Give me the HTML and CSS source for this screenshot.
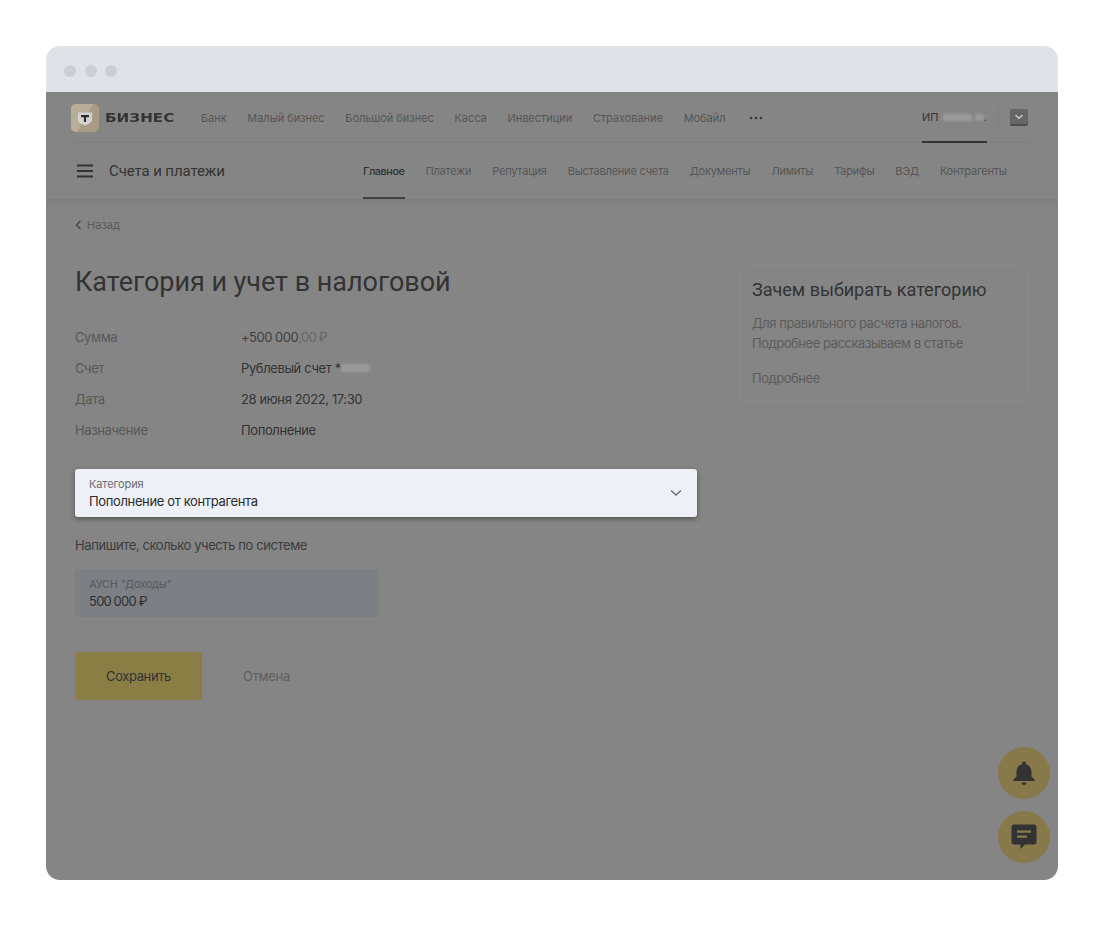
FILE: index.html
```html
<!DOCTYPE html>
<html lang="ru">
<head>
<meta charset="utf-8">
<title>Категория и учет в налоговой</title>
<link rel="stylesheet" href="styles.css">
</head>
<body>
<div class="window">
  <div class="titlebar"><i class="dot"></i><i class="dot"></i><i class="dot"></i></div>
  <div class="app">
    <header class="top">
      <div class="logo">
        <svg width="28" height="28" viewBox="0 0 28 28"><rect width="28" height="28" rx="5" fill="#a99c83"/><path d="M0 5a5 5 0 0 1 5-5h17L6 28H5a5 5 0 0 1-5-5z" fill="#b8ad97"/><path d="M7 8.500h14v7.500c0 2.500-3.500 3.800-7 5.500-3.500-1.700-7-3-7-5.500z" fill="#d2d2d2"/><path d="M10 11h8v2.200h-2.900V18h-2.200v-4.800H10z" fill="#2c2c2c"/></svg>
        <span class="logo-text">БИЗНЕС</span>
      </div>
      <nav class="topnav">
        <a>Банк</a><a>Малый бизнес</a><a>Большой бизнес</a><a>Касса</a><a>Инвестиции</a><a>Страхование</a><a>Мобайл</a>
        <svg class="more" width="14" height="4" viewBox="0 0 14 4"><circle cx="2" cy="2" r="1.300" fill="#3c3c3c"/><circle cx="7" cy="2" r="1.300" fill="#3c3c3c"/><circle cx="12" cy="2" r="1.300" fill="#3c3c3c"/></svg>
      </nav>
      <div class="account">
        <div class="user">ИП <span class="blur b1"></span><span class="blur b2"></span><span class="period">.</span></div>
        <div class="sep"></div>
        <svg class="acct-icon" width="18" height="17" viewBox="0 0 18 17"><rect y="1" width="18" height="16" rx="2" fill="#4e4e4e"/><rect width="18" height="15" rx="2" fill="#666"/><path d="M5.500 6l3.500 3.300L12.500 6" fill="none" stroke="#c8c8c8" stroke-width="1.500"/></svg>
      </div>
    </header>
    <div class="subbar">
      <div class="section">
        <svg width="16" height="14" viewBox="0 0 16 14"><path d="M0 1.500h16M0 7h16M0 12.500h16" stroke="#333" stroke-width="1.800"/></svg>
        <span>Счета и платежи</span>
      </div>
      <nav class="subnav">
        <a class="active">Главное</a><a>Платежи</a><a>Репутация</a><a>Выставление счета</a><a>Документы</a><a>Лимиты</a><a>Тарифы</a><a>ВЭД</a><a>Контрагенты</a>
      </nav>
    </div>
    <main class="page">
      <a class="back"><svg width="7" height="10" viewBox="0 0 7 10"><path d="M5.500 1L1.500 5l4 4" fill="none" stroke="#4a4a4a" stroke-width="1.500"/></svg>Назад</a>
      <div class="columns">
        <section class="main">
          <h1>Категория и учет в налоговой</h1>
          <dl class="facts">
            <div class="fact"><dt>Сумма</dt><dd class="sum">+500 000<span class="cents">,00 ₽</span></dd></div>
            <div class="fact"><dt>Счет</dt><dd>Рублевый счет *<span class="blur b3"></span></dd></div>
            <div class="fact"><dt>Дата</dt><dd>28 июня 2022, 17:30</dd></div>
            <div class="fact"><dt>Назначение</dt><dd>Пополнение</dd></div>
          </dl>
          <div class="select">
            <div>
              <div class="label">Категория</div>
              <div class="value">Пополнение от контрагента</div>
            </div>
            <svg width="12" height="8" viewBox="0 0 12 8"><path d="M1 1.500l5 4.500 5-4.500" fill="none" stroke="#6e7075" stroke-width="1.600"/></svg>
          </div>
          <p class="hint">Напишите, сколько учесть по системе</p>
          <div class="field">
            <div class="label dim">АУСН "Доходы"</div>
            <div class="value amount">500 000 ₽</div>
          </div>
          <div class="actions">
            <button class="save">Сохранить</button>
            <button class="cancel">Отмена</button>
          </div>
        </section>
        <aside class="card">
          <h2>Зачем выбирать категорию</h2>
          <p>Для правильного расчета налогов.<br>Подробнее рассказываем в статье</p>
          <a>Подробнее</a>
        </aside>
      </div>
    </main>
    <button class="fab fab-bell">
      <svg width="24" height="26" viewBox="0 0 24 26"><path d="M12 1.500a2 2 0 0 1 2 2v.7c3.500 1 5.500 4 5.500 8v4.300l3.500 3.500v1H1v-1l3.500-3.500v-4.300c0-4.200 2-7.200 5.500-8v-.7a2 2 0 0 1 2-2zM9.500 22.500h5a2.500 2.500 0 0 1-5 0z" fill="#333"/></svg>
    </button>
    <button class="fab fab-chat">
      <svg width="26" height="26" viewBox="0 0 26 26"><path d="M3 .5h20a2.500 2.500 0 0 1 2.500 2.500v15a2.500 2.500 0 0 1-2.500 2.500h-9l-4.500 4.500v-4.500H3A2.500 2.500 0 0 1 .5 18V3A2.500 2.500 0 0 1 3 .5z" fill="#333"/><path d="M6 6.500h14v2.200H6zM6 11.500h10v2.200H6z" fill="#87794a"/></svg>
    </button>
  </div>
</div>
</body>
</html>
```

FILE: styles.css
```css
* { box-sizing: border-box; }
html, body { margin: 0; padding: 0; background: #fff; }
body { padding: 46px 46px 46px; font-family: Inter, "Noto Sans", sans-serif; color: #333; }
a { text-decoration: none; color: inherit; }
button { font-family: inherit; border: 0; padding: 0; }

.window { width: 1012px; height: 834px; border-radius: 14px; overflow: hidden; display: flex; flex-direction: column; }
.titlebar { height: 46px; flex: none; background: #dfe2e7; display: flex; align-items: center; gap: 8.500px; padding-left: 18px; padding-top: 3px; }
.dot { width: 12px; height: 12px; border-radius: 50%; background: #c9ced8; display: block; }

.app { flex: 1; position: relative; background: #858585; display: flex; flex-direction: column; }

.top { height: 51px; margin: 0 29px 0 25px; flex: none; display: flex; align-items: center; position: relative; }
.top::after { content: ""; position: absolute; left: 4px; right: 0; bottom: 0; height: 1px; background: #7e7e7e; }
.logo { display: flex; align-items: center; gap: 6px; width: 130px; }
.logo-text { font-family: "DejaVu Sans", sans-serif; font-size: 13px; font-weight: 700; color: #333; transform: scaleX(1.170); transform-origin: left center; }
.topnav { display: flex; align-items: center; gap: 20.800px; font-size: 11px; letter-spacing: -.05px; color: #565656; white-space: nowrap; margin-top: 1px; }
.more { margin-left: 3px; }
.account { margin-left: auto; height: 51px; display: flex; align-items: center; }
.user { height: 51px; width: 65px; display: flex; align-items: center; font-size: 11px; color: #333; border-bottom: 2px solid #333; position: relative; z-index: 1; padding-top: 1px; white-space: pre; }
.blur { display: inline-block; background: #9a9a9a; filter: blur(1px); height: 7px; }
.b1 { width: 32px; margin-left: 1px; }
.b2 { width: 9px; margin-left: 3px; }
.period { margin-left: 0; }
.sep { width: 1px; height: 22px; background: #7e7e7e; margin: 0 11px; }
.acct-icon { margin-right: 1px; margin-top: -1px; }

.subbar { height: 56px; flex: none; padding: 0 21px 0 31px; display: flex; align-items: center; position: relative; background: #858585; box-shadow: 0 3px 9px rgba(0,0,0,.07); }
.section { display: flex; align-items: center; gap: 16px; font-size: 15px; color: #333; width: 286px; letter-spacing: -.1px; font-family: Roboto, Inter, sans-serif; }
.subnav { height: 56px; display: flex; align-items: stretch; gap: 21px; font-size: 11px; letter-spacing: -.22px; color: #565656; white-space: nowrap; }
.subnav a { display: flex; align-items: center; border-bottom: 2px solid transparent; padding-top: 2px; }
.subnav a.active { color: #333; font-weight: 500; letter-spacing: -.5px; border-bottom-color: #3f3f3f; }

.page { flex: 1; padding: 19px 29px 0; }
.back { display: flex; align-items: center; gap: 5px; font-size: 11px; color: #5a5a5a; height: 14px; }
.columns { display: flex; justify-content: space-between; margin-top: 32px; }
.main { width: 622px; }
h1 { margin: 0; font-family: Roboto, Inter, sans-serif; font-size: 27px; line-height: 36px; font-weight: 400; letter-spacing: -.04px; color: #333; }
.facts { margin: 21px 0 0; }
.fact { display: flex; height: 31px; align-items: center; font-size: 13px; letter-spacing: -.38px; }
dt { width: 166px; color: #585858; }
dd { margin: 0; color: #333; display: flex; align-items: center; white-space: pre; }
.sum { color: #3f3f3f; letter-spacing: -.5px; }
.cents { color: #686868; letter-spacing: -.6px; word-spacing: -.8px; }
.b3 { width: 29px; height: 8px; background: #9a9a9a; margin-left: 0; }

.select { margin-top: 24px; height: 48px; background: #edf0f7; border-radius: 3px; box-shadow: 0 2px 5px rgba(0,0,0,.38); padding: 0 15px 0 14px; display: flex; justify-content: space-between; align-items: center; }
.label { font-size: 11px; line-height: 14px; letter-spacing: -.1px; color: #6a6c70; }
.label.dim { color: #585a5d; letter-spacing: -.2px; }
.value { font-size: 13px; line-height: 18px; margin-top: 1px; letter-spacing: -.36px; color: #2b2b2b; }
.hint { margin: 19px 0 0; font-size: 13px; line-height: 18px; letter-spacing: -.4px; color: #3c3c3c; }
.field { margin-top: 15px; width: 303px; height: 48px; background: #7c7f83; border-radius: 3px; padding: 8px 14px 0; }
.field .value { color: #2f2f2f; }
.field .amount { letter-spacing: -.75px; word-spacing: -.4px; }
.actions { margin-top: 35px; display: flex; align-items: center; }
.save { width: 127px; height: 48px; background: #8a7e45; border-radius: 3px; font-size: 13px; letter-spacing: -.4px; color: #333; }
.cancel { margin-left: 41px; background: none; font-size: 13px; letter-spacing: -.3px; color: #5f5f5f; }

.card { width: 290px; height: 137px; margin-top: 1px; border: 1px solid #8a8a8a; border-radius: 8px; padding: 12px; }
h2 { margin: 0; font-family: Roboto, Inter, sans-serif; font-size: 18px; line-height: 24px; font-weight: 400; color: #333; }
.card p { margin: 11px 0 0; font-size: 13px; line-height: 20px; letter-spacing: -.45px; color: #5c5c5c; }
.card a { display: block; margin-top: 16px; font-size: 13px; line-height: 18px; letter-spacing: -.45px; color: #5c5c5c; }

.fab { position: absolute; left: 952px; width: 52px; height: 52px; border-radius: 50%; background: #87794a; display: flex; align-items: center; justify-content: center; }
.fab-bell { top: 655px; }
.fab-chat { top: 719px; }
```
